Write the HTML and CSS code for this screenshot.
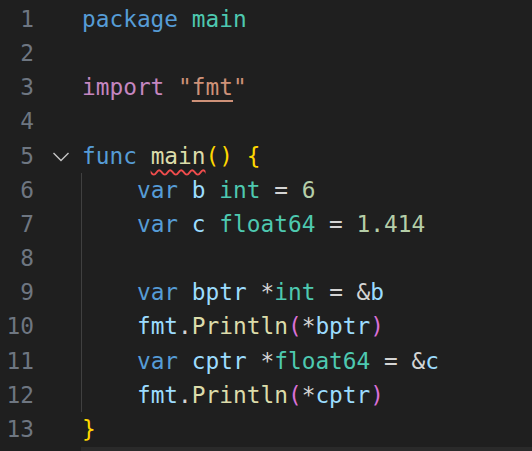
FILE: index.html
```html
<!DOCTYPE html>
<html>
<head>
<meta charset="utf-8">
<link rel="stylesheet" href="styles.css">
</head>
<body>
<div class="editor">
  <div class="row"><span class="ln">1</span><span class="fold"></span><span class="code"><span class="kw">package</span> <span class="ty">main</span></span></div>
  <div class="row"><span class="ln">2</span><span class="fold"></span><span class="code"></span></div>
  <div class="row"><span class="ln">3</span><span class="fold"></span><span class="code"><span class="ctl">import</span> <span class="str">"<span class="link">fmt</span>"</span></span></div>
  <div class="row"><span class="ln">4</span><span class="fold"></span><span class="code"></span></div>
  <div class="row"><span class="ln">5</span><span class="fold"><svg class="chev" width="18" height="12" viewBox="0 0 18 12"><path d="M1.5 2 L9 9.5 L16.5 2" fill="none" stroke="#c5c5c5" stroke-width="1.4"/></svg></span><span class="code"><span class="kw">func</span> <span class="fn err">main</span><span class="b1">()</span> <span class="b1">{</span></span></div>
  <div class="row"><span class="ln">6</span><span class="fold"></span><span class="code guide">    <span class="kw">var</span> <span class="id">b</span> <span class="ty">int</span> <span class="op">=</span> <span class="num">6</span></span></div>
  <div class="row"><span class="ln">7</span><span class="fold"></span><span class="code guide">    <span class="kw">var</span> <span class="id">c</span> <span class="ty">float64</span> <span class="op">=</span> <span class="num">1.414</span></span></div>
  <div class="row"><span class="ln">8</span><span class="fold"></span><span class="code guide"></span></div>
  <div class="row"><span class="ln">9</span><span class="fold"></span><span class="code guide">    <span class="kw">var</span> <span class="id">bptr</span> <span class="op">*</span><span class="ty">int</span> <span class="op">=</span> <span class="op">&amp;</span><span class="id">b</span></span></div>
  <div class="row"><span class="ln">10</span><span class="fold"></span><span class="code guide">    <span class="id">fmt</span><span class="op">.</span><span class="fn">Println</span><span class="b2">(</span><span class="op">*</span><span class="id">bptr</span><span class="b2">)</span></span></div>
  <div class="row"><span class="ln">11</span><span class="fold"></span><span class="code guide">    <span class="kw">var</span> <span class="id">cptr</span> <span class="op">*</span><span class="ty">float64</span> <span class="op">=</span> <span class="op">&amp;</span><span class="id">c</span></span></div>
  <div class="row"><span class="ln">12</span><span class="fold"></span><span class="code guide">    <span class="id">fmt</span><span class="op">.</span><span class="fn">Println</span><span class="b2">(</span><span class="op">*</span><span class="id">cptr</span><span class="b2">)</span></span></div>
  <div class="row"><span class="ln">13</span><span class="fold"></span><span class="code"><span class="b1">}</span></span></div>
  <div class="scroll"><span class="scroll-gap"></span><span class="scroll-bar"></span></div>
</div>
</body>
</html>
```
FILE: styles.css
```css
html, body {
  margin: 0;
  padding: 0;
  background: #1f1f1f;
}
.editor {
  width: 532px;
  height: 451px;
  overflow: hidden;
  padding-top: 2px;
  box-sizing: border-box;
  font-family: "DejaVu Sans Mono", "Liberation Mono", monospace;
  font-size: 22.8px;
  line-height: 34.17px;
  color: #d4d4d4;
  display: flex;
  flex-direction: column;
}
.row {
  display: flex;
  height: 34.17px;
  flex: none;
  white-space: pre;
}
.ln {
  width: 34px;
  text-align: right;
  color: #6e7681;
  flex: none;
}
.fold {
  width: 47px;
  flex: none;
  display: flex;
  align-items: center;
  padding-left: 18px;
  box-sizing: border-box;
}
.chev { display: block; margin-top: 3px; }
.code {
  flex: 1;
  padding-left: 1px;
}
.guide {
  box-shadow: inset 1px 0 #404040;
}
.kw { color: #569cd6; }
.ty { color: #4ec9b0; }
.ctl { color: #c586c0; }
.str { color: #ce9178; }
.link {
  text-decoration: underline solid #ce9178;
  text-decoration-thickness: 2px;
  text-underline-offset: 5px;
}
.fn { color: #dcdcaa; }
.err {
  text-decoration: underline wavy #f14c4c;
  text-decoration-thickness: 1.5px;
  text-underline-offset: 5px;
}
.b1 { color: #ffd700; }
.b2 { color: #da70d6; }
.id { color: #9cdcfe; }
.op { color: #d4d4d4; }
.num { color: #b5cea8; }
.scroll {
  display: flex;
  flex: none;
  margin-top: 1px;
  height: 6px;
}
.scroll-gap { width: 81px; flex: none; }
.scroll-bar { flex: 1; background: #2a2a2a; }
```
